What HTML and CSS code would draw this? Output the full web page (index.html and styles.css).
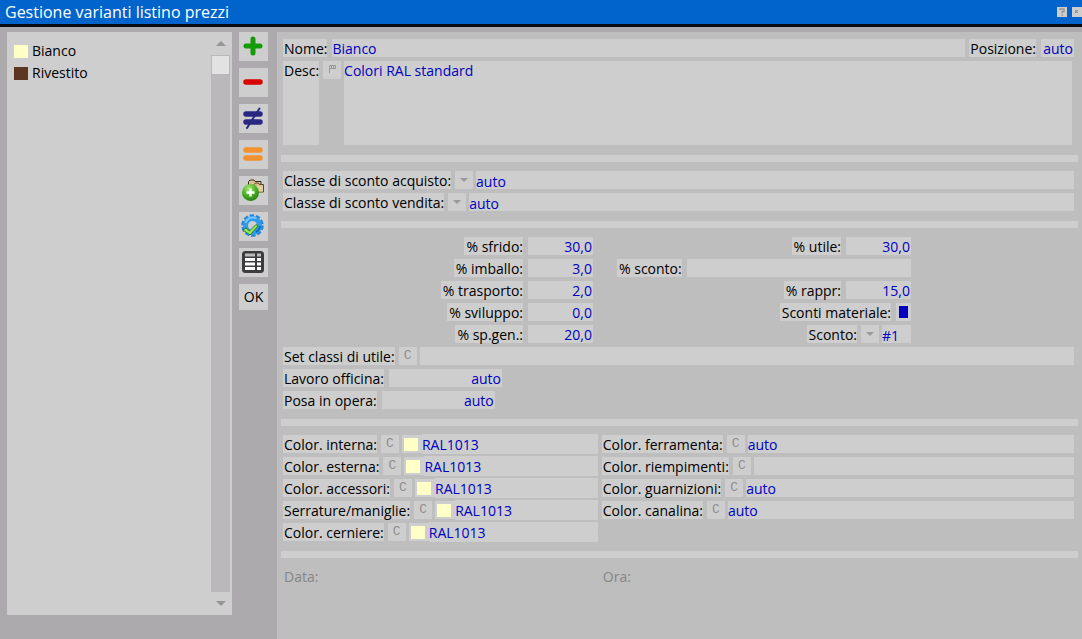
FILE: index.html
```html
<!DOCTYPE html>
<html lang="it">
<head>
  <meta charset="UTF-8">
  <title>Gestione varianti listino prezzi</title>
  <link rel="stylesheet" href="styles.css">
</head>
<body>
  <header class="titlebar">
    <h1>Gestione varianti listino prezzi</h1>
    <button class="win-btn" aria-label="Aiuto"><svg width="10" height="10" viewBox="0 0 10 10"><path d="M3 3.200V2h4v2.600H5.200V6.500M5.200 7.500V9" fill="none" stroke="#999" stroke-width="1.500"/></svg></button>
    <button class="win-btn" aria-label="Chiudi"><svg width="10" height="10" viewBox="0 0 10 10"><path d="M3 3h3v1H5v1h1v1H3z" fill="#999"/></svg></button>
  </header>

  <main class="window">
    <!-- elenco varianti -->
    <section class="list">
      <ul>
        <li><button><span class="swatch cream"></span>Bianco</button></li>
        <li><button><span class="swatch brown"></span>Rivestito</button></li>
      </ul>
      <div class="scrollbar">
        <button aria-label="Su"><svg width="10" height="5"><path d="M5 0l5 5H0z" fill="#969496"/></svg></button>
        <div class="track"><div class="thumb"></div></div>
        <button aria-label="Giù"><svg width="10" height="5"><path d="M0 0h10L5 5z" fill="#969496"/></svg></button>
      </div>
    </section>

    <!-- barra strumenti -->
    <nav class="tools">
      <button aria-label="Aggiungi"><svg width="29" height="29"><path d="M14 7v14M7 14h14" stroke="#149b0a" stroke-width="5" stroke-linecap="round"/></svg></button>
      <button aria-label="Elimina"><svg width="29" height="29"><path d="M7 14h14" stroke="#d90000" stroke-width="5.500" stroke-linecap="round"/></svg></button>
      <button aria-label="Diverso"><svg width="29" height="29"><path d="M7 10h14M7 18h14" stroke="#282882" stroke-width="5.500" stroke-linecap="round"/><path d="M20.500 4.500L14 14.500 8 24" fill="none" stroke="#282882" stroke-width="2" stroke-linecap="round"/></svg></button>
      <button aria-label="Uguale"><svg width="29" height="29"><path d="M7 10h14M7 18h14" stroke="#f29130" stroke-width="5.500" stroke-linecap="round"/></svg></button>
      <button aria-label="Aggiungi da cartella">
        <svg width="29" height="29">
          <defs>
            <radialGradient id="ball" cx=".4" cy=".25" r=".8"><stop offset="0" stop-color="#a5e878"/><stop offset=".5" stop-color="#4db526"/><stop offset="1" stop-color="#217a0c"/></radialGradient>
          </defs>
          <path d="M9.500 13V5.500l1.500-1.500h4l1 1.500h6V14" fill="#d9c194" stroke="#3a2f1c"/>
          <path d="M15 16V8.500L16.500 7h3l1 1.500h4V16z" fill="#d8bd8c" stroke="#5a4828"/>
          <path d="M16 10h8v5.500h-8z" fill="#e3cda3"/>
          <circle cx="11.500" cy="16.500" r="8.500" fill="url(#ball)"/>
          <path d="M11.500 12.500v8M7.500 16.500h8" stroke="#fff" stroke-width="2.500"/>
        </svg>
      </button>
      <button aria-label="Applica impostazioni">
        <svg width="29" height="29">
          <circle cx="13.500" cy="13.500" r="9.500" fill="none" stroke="#2385dc" stroke-width="3.500" stroke-dasharray="4.200 1.770"/>
          <circle cx="13.500" cy="13.500" r="7" fill="none" stroke="#2f9bea" stroke-width="5"/>
          <path d="M6.500 11a7.500 7.500 0 0 1 11-4.500" fill="none" stroke="#74c5fa" stroke-width="2"/>
          <path d="M17 20a7.500 7.500 0 0 0 4-6" fill="none" stroke="#1468b8" stroke-width="2"/>
          <path d="M4 18l3-2 3.500 3 6.500-6.500 2 1.500-8 9z" fill="#9be56d" stroke="#288210"/>
        </svg>
      </button>
      <button aria-label="Tabella">
        <svg width="29" height="29">
          <rect x="4.500" y="4.500" width="19" height="19" rx="2" fill="#3c3c3e" stroke="#3c3c3e" stroke-width="3"/>
          <path d="M6 7h10M18 7h4" stroke="#bbb" stroke-width="3"/>
          <path d="M6 11.500h10M18 11.500h4M6 16h10M18 16h4M6 20.500h10M18 20.500h4" stroke="#fff" stroke-width="3"/>
        </svg>
      </button>
      <button class="ok">OK</button>
    </nav>

    <!-- dati della variante -->
    <form class="form">
      <div class="group">
        <div class="row">
          <label for="nome">Nome:</label>
          <input class="grow" id="nome" value="Bianco">
          <label for="posizione">Posizione:</label>
          <input class="pos num" id="posizione" value="auto">
        </div>
        <div class="row desc">
          <label for="desc">Desc:</label>
          <button type="button" class="mini" aria-label="Lingua"><svg width="8" height="8"><path d="M1.500 8V.5H7.500v3H1.500M3.500 1v2M5.500 1v2" fill="none" stroke="#999"/></svg></button>
          <textarea class="grow" id="desc">Colori RAL standard</textarea>
        </div>
      </div>

      <div class="group">
        <div class="row">
          <label for="acquisto">Classe di sconto acquisto:</label>
          <select class="grow" id="acquisto"><option>auto</option></select>
        </div>
        <div class="row">
          <label for="vendita">Classe di sconto vendita:</label>
          <select class="grow" id="vendita"><option>auto</option></select>
        </div>
      </div>

      <div class="group">
        <div class="percents">
          <div class="row end"><label for="sfrido">% sfrido:</label><input class="short num" id="sfrido" value="30,0"></div>
          <div class="row end"><label for="utile">% utile:</label><input class="short num" id="utile" value="30,0"></div>
          <div class="row end"><label for="imballo">% imballo:</label><input class="short num" id="imballo" value="3,0"></div>
          <div class="row"><label for="sconto">% sconto:</label><input class="grow" id="sconto"></div>
          <div class="row end"><label for="trasporto">% trasporto:</label><input class="short num" id="trasporto" value="2,0"></div>
          <div class="row end"><label for="rappr">% rappr:</label><input class="short num" id="rappr" value="15,0"></div>
          <div class="row end"><label for="sviluppo">% sviluppo:</label><input class="short num" id="sviluppo" value="0,0"></div>
          <div class="row end"><label for="materiale">Sconti materiale:</label><input type="checkbox" id="materiale" checked></div>
          <div class="row end"><label for="spgen">% sp.gen.:</label><input class="short num" id="spgen" value="20,0"></div>
          <div class="row end"><label for="tipo">Sconto:</label><select class="tipo" id="tipo"><option>#1</option></select></div>
        </div>
        <div class="row">
          <label for="classi">Set classi di utile:</label>
          <button type="button" class="mini">C</button>
          <input class="grow" id="classi">
        </div>
        <div class="row"><label for="officina">Lavoro officina:</label><input class="medium num" id="officina" value="auto"></div>
        <div class="row"><label for="posa">Posa in opera:</label><input class="medium num" id="posa" value="auto"></div>
      </div>

      <div class="group columns">
        <div class="column">
          <div class="row"><label for="interna">Color. interna:</label><button type="button" class="mini">C</button><div class="color"><span class="swatch cream"></span><input id="interna" value="RAL1013"></div></div>
          <div class="row"><label for="esterna">Color. esterna:</label><button type="button" class="mini">C</button><div class="color"><span class="swatch cream"></span><input id="esterna" value="RAL1013"></div></div>
          <div class="row"><label for="accessori">Color. accessori:</label><button type="button" class="mini">C</button><div class="color"><span class="swatch cream"></span><input id="accessori" value="RAL1013"></div></div>
          <div class="row"><label for="serrature">Serrature/maniglie:</label><button type="button" class="mini">C</button><div class="color"><span class="swatch cream"></span><input id="serrature" value="RAL1013"></div></div>
          <div class="row"><label for="cerniere">Color. cerniere:</label><button type="button" class="mini">C</button><div class="color"><span class="swatch cream"></span><input id="cerniere" value="RAL1013"></div></div>
        </div>
        <div class="column">
          <div class="row"><label for="ferramenta">Color. ferramenta:</label><button type="button" class="mini">C</button><input class="grow" id="ferramenta" value="auto"></div>
          <div class="row"><label for="riempimenti">Color. riempimenti:</label><button type="button" class="mini">C</button><input class="grow" id="riempimenti"></div>
          <div class="row"><label for="guarnizioni">Color. guarnizioni:</label><button type="button" class="mini">C</button><input class="grow" id="guarnizioni" value="auto"></div>
          <div class="row"><label for="canalina">Color. canalina:</label><button type="button" class="mini">C</button><input class="grow" id="canalina" value="auto"></div>
        </div>
      </div>

      <div class="group columns stamp">
        <span>Data:</span>
        <span>Ora:</span>
      </div>
    </form>
  </main>
</body>
</html>
```

FILE: styles.css
```css
* {
  box-sizing: border-box;
}
body {
  margin: 0;
  min-height: 100vh;
  display: flex;
  flex-direction: column;
  background: #acaaac;
  color: #000;
  font: 14px/18px "Open Sans", "Noto Sans", sans-serif;
}
button, input, select, textarea {
  margin: 0;
  padding: 0;
  border: 0;
  border-radius: 0;
  outline: 0;
  background: #cecece;
  color: inherit;
  font: inherit;
}

/* barra del titolo */
.titlebar {
  display: flex;
  align-items: center;
  gap: 5px;
  height: 27px;
  padding-left: 5px;
  background: #0064cc;
  border-bottom: 3px solid #080c12;
}
.titlebar h1 {
  flex: 1;
  margin: 0;
  color: #fff;
  font-size: 16px;
  line-height: 24px;
  font-weight: 400;
}
.win-btn {
  width: 10px;
  height: 10px;
}
.win-btn svg, .tools svg {
  display: block;
}

.window {
  flex: 1;
  display: flex;
  padding: 5px 0 0 7px;
}

/* elenco */
.list {
  width: 225px;
  margin-bottom: 24px;
  padding-right: 2px;
  display: flex;
  background: #cecece;
}
.list ul {
  flex: 1;
  margin: 0;
  padding: 8px 7px;
  list-style: none;
}
.list li button {
  display: flex;
  align-items: center;
  gap: 4px;
  width: 100%;
  height: 22px;
}
.swatch {
  flex: none;
  width: 14px;
  height: 13px;
}
.cream {
  background: #ffffc8;
}
.brown {
  background: #5c3620;
}
.scrollbar {
  width: 19px;
  display: flex;
  flex-direction: column;
}
.scrollbar button {
  height: 23px;
  display: flex;
  align-items: center;
  justify-content: center;
}
.track {
  flex: 1;
  background: #bab8ba;
}
.thumb {
  height: 20px;
  background: #e2e2e2;
  border: 1px solid #b8b8b8;
}

/* strumenti */
.tools {
  width: 45px;
  padding-left: 7px;
  display: flex;
  flex-direction: column;
  gap: 7px;
}
.tools button {
  width: 29px;
  height: 29px;
}
.tools .ok {
  height: 26px;
}

/* scheda */
.form {
  flex: 1;
  min-width: 0;
  padding: 7px 4px 0;
  background: #bebebe;
}
.group {
  padding: 0 4px 0 2px;
}
.group + .group::before {
  content: "";
  grid-column: 1 / -1;
  display: block;
  height: 7px;
  margin: 10px -4px 9px -2px;
  background: #cecece;
}
.row {
  display: flex;
  height: 18px;
  gap: 4px;
}
.row + .row, .percents + .row {
  margin-top: 4px;
}
.row.end {
  justify-content: flex-end;
}
.row label {
  padding-left: 1px;
  background: #cecece;
  line-height: 20px;
  white-space: nowrap;
}
.row input, .row select, .row textarea {
  min-width: 0;
  padding-top: 2px;
  color: #0000c0;
}
.row label + input {
  margin-left: 1px;
}
.grow {
  flex: 1;
}
.row.desc {
  height: 84px;
}
.desc textarea {
  resize: none;
  margin-right: 2px;
  line-height: 16px;
}
.row .num {
  padding-right: 1px;
  text-align: right;
}
.pos {
  width: 33px;
}
.short {
  width: 65px;
}
.medium {
  width: 113px;
}
.mini {
  flex: none;
  width: 18px;
  height: 18px;
  margin-right: -1px;
  color: #8e8e8e;
  font: 13px/16px "Liberation Mono", monospace;
}
.row select {
  appearance: none;
  padding-left: 21px;
  background:
    url("data:image/svg+xml,%3Csvg xmlns='http://www.w3.org/2000/svg' width='18' height='18'%3E%3Cpath d='M5 7h8l-4 4z' fill='%23999'/%3E%3C/svg%3E") no-repeat,
    linear-gradient(to right, #cecece 18px, #bebebe 18px, #bebebe 21px, #cecece 21px);
}
.tipo {
  width: 50px;
}
.row input[type="checkbox"] {
  appearance: none;
  width: 15px;
  height: 18px;
  padding: 0;
  border: 3px solid #cecece;
}
.row input[type="checkbox"]:checked {
  background: #0000c0;
}

.percents {
  display: grid;
  grid-template-columns: 310px 294px;
  column-gap: 24px;
  row-gap: 4px;
}
.percents .row {
  margin-top: 0;
}
.percents label {
  padding-left: 2px;
}

.columns {
  display: grid;
  grid-template-columns: minmax(0, 2fr) minmax(0, 3fr);
  column-gap: 4px;
}
.color {
  flex: 1;
  min-width: 0;
  display: flex;
  align-items: center;
  gap: 4px;
  padding-left: 2px;
  background: #cecece;
}
.color input {
  flex: 1;
}
.stamp {
  color: #868686;
  line-height: 20px;
}
.stamp span {
  padding-left: 1px;
}
```
